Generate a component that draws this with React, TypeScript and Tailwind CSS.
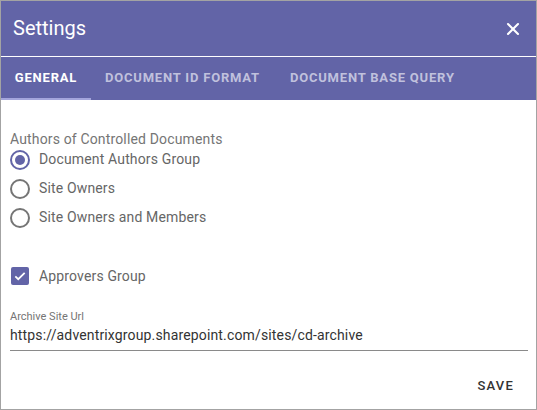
import { X } from "lucide-react";

function Radio({ checked, label }: { checked?: boolean; label: string }) {
  return (
    <label className="flex items-center h-[29px] gap-[9px]">
      <span
        className={`flex items-center justify-center w-[20px] h-[20px] rounded-full border-2 ${
          checked ? "border-[#6264a7]" : "border-[#757575]"
        }`}
      >
        {checked && <span className="w-[10px] h-[10px] rounded-full bg-[#6264a7]" />}
      </span>
      <span className="text-[14px] tracking-[0.15px] text-[#666666]">{label}</span>
    </label>
  );
}

export default function App() {
  return (
    <div className="w-[537px] h-[410px] border border-[#a3a3a3] bg-white flex flex-col font-['Roboto',sans-serif]">
      <div className="bg-[#6264a7] h-[55px] flex items-center justify-between pl-[12px] pr-[13px]">
        <h1 className="text-[20px] text-white leading-none -mt-[1px]">Settings</h1>
        <X className="w-[20px] h-[20px] text-white" strokeWidth={2.5} />
      </div>
      <div className="h-px bg-white" />
      <div className="bg-[#6264a7] h-[43px] flex items-stretch">
        <div className="w-[90px] flex items-center justify-center border-b-2 border-[#a4a5dc]">
          <span className="text-[13px] font-bold tracking-[0.8px] text-white mt-[1px]">GENERAL</span>
        </div>
        <div className="px-[14px] flex items-center border-b-2 border-transparent">
          <span className="text-[13px] font-bold tracking-[0.8px] text-[#c0c1dd] mt-[1px]">DOCUMENT ID FORMAT</span>
        </div>
        <div className="px-[16px] flex items-center border-b-2 border-transparent">
          <span className="text-[13px] font-bold tracking-[0.8px] text-[#c0c1dd] mt-[1px]">DOCUMENT BASE QUERY</span>
        </div>
      </div>
      <div className="flex-1 flex flex-col px-[9px] pt-[31px]">
        <p className="text-[14px] tracking-[0.15px] text-[#757575] leading-[17px]">Authors of Controlled Documents</p>
        <div className="flex flex-col -mt-[3px]">
          <Radio checked label="Document Authors Group" />
          <Radio label="Site Owners" />
          <Radio label="Site Owners and Members" />
        </div>
        <label className="flex items-center gap-[10px] mt-[34px] pl-[1px]">
          <span className="w-[18px] h-[18px] rounded-[2px] bg-[#6264a7] flex items-center justify-center">
            <svg viewBox="0 0 24 24" className="w-[14px] h-[14px]" fill="none" stroke="white" strokeWidth={3}>
              <path d="M4 12.5l5 5L20 6.5" />
            </svg>
          </span>
          <span className="text-[14px] tracking-[0.15px] text-[#666666] leading-[20px]">Approvers Group</span>
        </label>
        <div className="mt-[24px] flex flex-col">
          <span className="text-[11px] text-[#757575] leading-[13px]">Archive Site Url</span>
          <div className="border-b border-[#8a8a8a] pt-[2px] pb-[5px] w-[518px]">
            <span className="block text-[14px] tracking-[0.15px] leading-[20px] text-[#333333]">
              https://adventrixgroup.sharepoint.com/sites/cd-archive
            </span>
          </div>
        </div>
        <div className="flex justify-end mt-[25px] pr-[13px]">
          <span className="text-[13px] font-medium tracking-[1.2px] text-[#333333]">SAVE</span>
        </div>
      </div>
    </div>
  );
}
